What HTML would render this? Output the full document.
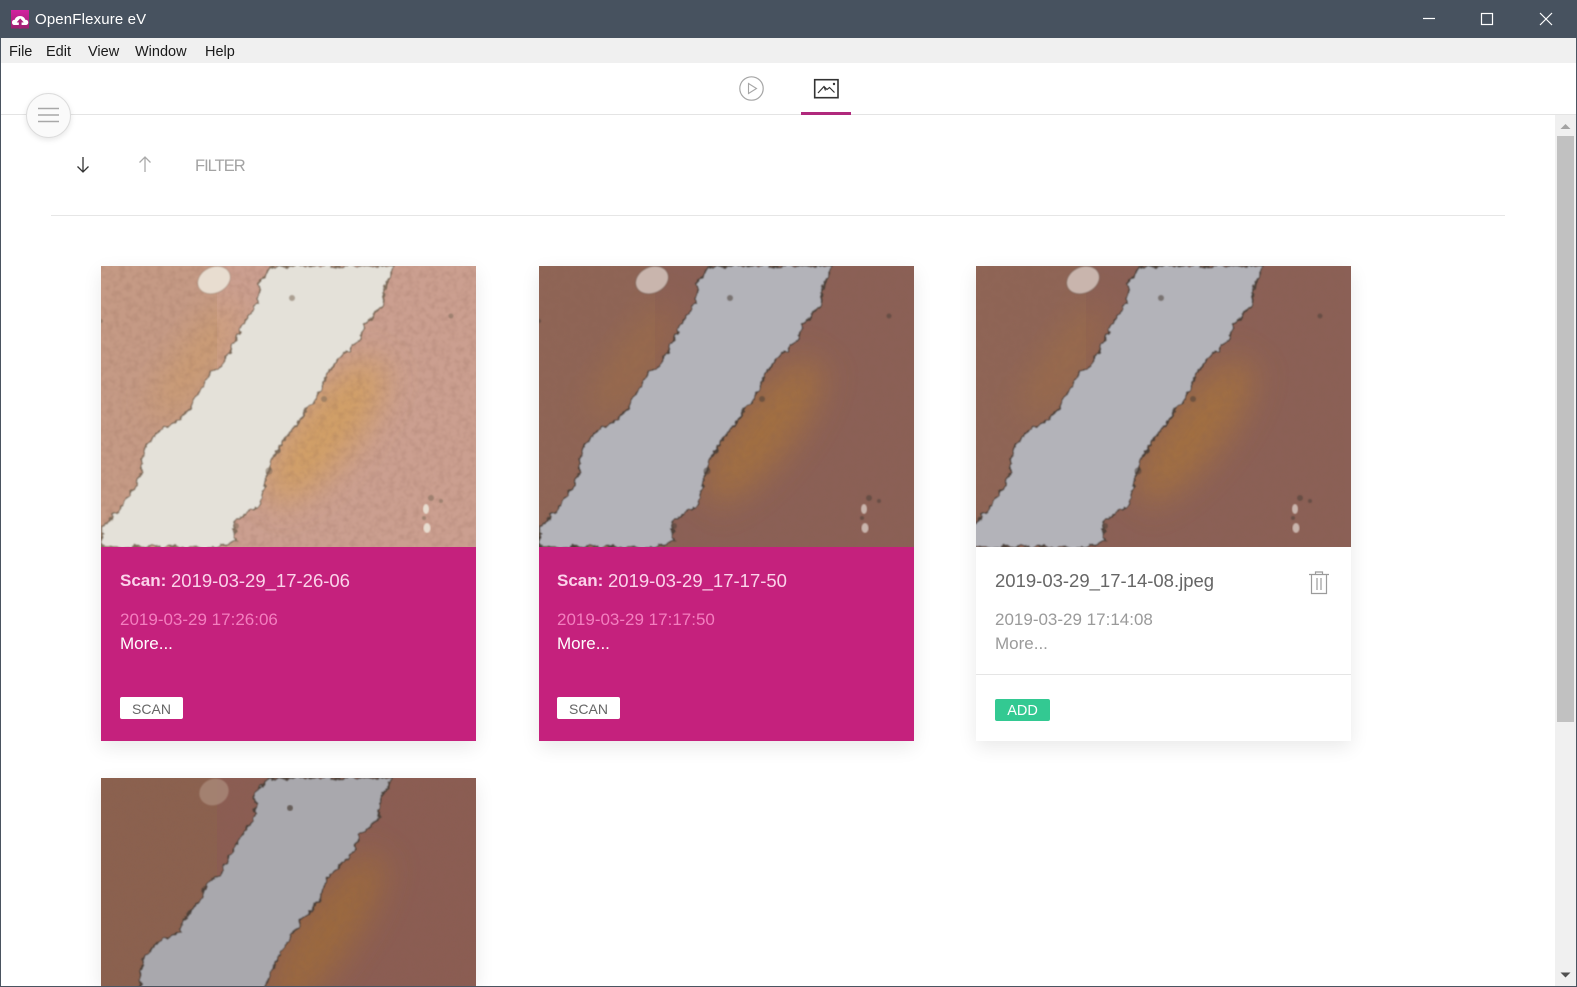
<!DOCTYPE html>
<html lang="en"><head><meta charset="utf-8"><title>OpenFlexure eV</title>
<style>
html,body{margin:0;padding:0;background:#fff;width:1577px;height:987px;overflow:hidden}
body{font-family:"Liberation Sans",sans-serif}
#w{position:relative;width:1577px;height:987px;overflow:hidden}
.a{position:absolute;white-space:nowrap}
.card{position:absolute;width:375px;box-shadow:0 6px 18px rgba(0,0,0,.09)}
.card svg{display:block}
.t{line-height:20px}
.m{font-size:14.5px;color:#1a1a1a;top:42px;line-height:20px}
</style></head><body><div id="w">
<svg width="0" height="0" style="position:absolute">
<defs>
<filter id="b1" x="-5%" y="-5%" width="110%" height="110%"><feGaussianBlur stdDeviation=".8"/></filter>
<filter id="j" x="-5%" y="-5%" width="110%" height="110%"><feTurbulence type="fractalNoise" baseFrequency=".13" numOctaves="3" seed="7" result="t"/><feDisplacementMap in="SourceGraphic" in2="t" scale="8" xChannelSelector="R" yChannelSelector="G"/><feGaussianBlur stdDeviation=".8"/></filter>
<filter id="b2" x="-60%" y="-60%" width="220%" height="220%"><feGaussianBlur stdDeviation="16"/></filter>
<filter id="n" x="0" y="0" width="100%" height="100%"><feTurbulence type="fractalNoise" baseFrequency=".16" numOctaves="2" seed="4"/><feColorMatrix values="0 0 0 0 .25 0 0 0 0 .12 0 0 0 0 .08 1.4 0 0 0 -.55"/><feGaussianBlur stdDeviation=".5"/></filter>
<symbol id="s1" viewBox="0 0 375 281" width="375" height="281">
<rect width="375" height="281" fill="var(--l)"/>
<path d="M171 0 294 0 375 0V281H116V0Z" fill="var(--r)"/>
<ellipse cx="225" cy="165" rx="88" ry="30" transform="rotate(-52 225 165)" fill="var(--o)" opacity=".72" filter="url(#b2)"/>
<ellipse cx="95" cy="95" rx="70" ry="18" transform="rotate(-55 95 95)" fill="var(--o)" opacity=".4" filter="url(#b2)"/>
<rect width="375" height="281" filter="url(#n)" opacity=".3"/>
<path d="M171 0 159 14 156 37 139 64 132 81 122 97 106 111 99 127 86 144 79 154 59 164 42 184 41 204 32 224 16 247 1 261 0 281H116L136 274 132 257 159 237 166 211 172 191 196 157 216 131 222 117 236 94 256 77 266 57 282 37 286 14 294 0Z" fill="var(--b)" stroke="var(--e)" stroke-width="1.8" filter="url(#j)"/>
<ellipse cx="113" cy="14" rx="17" ry="13" transform="rotate(-25 113 14)" fill="var(--c)" stroke="var(--e)" stroke-opacity=".4" filter="url(#b1)"/>
<g fill="var(--e)" opacity=".55" filter="url(#b1)"><circle cx="191" cy="32" r="3"/><circle cx="0" cy="55" r="2"/><circle cx="350" cy="50" r="2.500"/><circle cx="330" cy="232" r="3"/><circle cx="323" cy="252" r="2"/><circle cx="340" cy="235" r="2"/><circle cx="223" cy="133" r="3"/><circle cx="168" cy="205" r="3.500"/><circle cx="135" cy="260" r="3"/></g>
<ellipse cx="325" cy="243" rx="3" ry="5" fill="var(--c)" filter="url(#b1)"/><ellipse cx="326" cy="262" rx="3.500" ry="5" fill="var(--c)" filter="url(#b1)"/>
</symbol>
<symbol id="s2" viewBox="0 0 375 208" width="375" height="208">
<rect width="375" height="208" fill="var(--l)"/>
<path d="M171 0H375V208H116V0Z" fill="var(--r)"/>
<ellipse cx="225" cy="155" rx="95" ry="28" transform="rotate(-55 225 155)" fill="var(--o)" opacity=".75" filter="url(#b2)"/>
<rect width="375" height="208" filter="url(#n)" opacity=".3"/>
<path d="M167 0 154 15 154 38 136 65 122 92 104 108 99 123 82 142 79 155 59 162 41 182 39 209 39 215H162L173 188 193 152 216 125 228 98 249 78 259 58 276 42 283 15 291 0Z" fill="var(--b)" stroke="var(--e)" stroke-width="1.8" filter="url(#j)"/>
<ellipse cx="113" cy="14" rx="15" ry="13" transform="rotate(-25 113 14)" fill="var(--c)" opacity=".7" filter="url(#b1)"/>
<circle cx="189" cy="30" r="3" fill="var(--e)" opacity=".7" filter="url(#b1)"/>
</symbol>
</defs>
</svg>

<!-- title bar -->
<div class="a" style="left:0;top:0;width:1577px;height:38px;background:#47525f"></div>
<svg class="a" style="left:10px;top:10px" width="20" height="19" viewBox="0 0 20 19">
<defs><linearGradient id="lg" x1="0" y1="0" x2="0" y2="1"><stop offset="0" stop-color="#d321a0"/><stop offset="1" stop-color="#9c1f6e"/></linearGradient></defs>
<rect x="1" width="18" height="18.500" fill="url(#lg)"/>
<path d="M2 12.500C2 10.500 3.400 9.800 4.800 9.800 5.200 7.600 7.300 6 10 6s4.800 1.600 5.200 3.800C16.800 9.800 18.300 10.600 18.300 12.500 18.300 14 17 15 15.700 15H4.400C3 15 2 14 2 12.500Z" fill="#fff"/>
<path d="M10.200 8.600 7 12.200H9V18.500H11.400V12.200H13.400Z" fill="#a81f79" stroke="#a81f79" stroke-width=".4"/>
</svg>
<div class="a" style="left:35px;top:10px;font-size:15px;line-height:20px;color:#fff;letter-spacing:.15px">OpenFlexure eV</div>
<svg class="a" style="left:1420px;top:8px" width="140" height="22" fill="none" stroke="#fff" stroke-width="1.2">
<path d="M3 10.500H15"/><rect x="61.500" y="5.500" width="11" height="11"/><path d="M120 5 132 17M132 5 120 17"/>
</svg>

<!-- menu -->
<div class="a" style="left:0;top:38px;width:1577px;height:25px;background:#f0f0f0"></div>
<div class="a m" style="left:9px">File</div>
<div class="a m" style="left:46px">Edit</div>
<div class="a m" style="left:88px">View</div>
<div class="a m" style="left:135px">Window</div>
<div class="a m" style="left:205px">Help</div>

<!-- tabs -->
<div class="a" style="left:0;top:114px;width:1577px;height:1px;background:#e4e4e4"></div>
<svg class="a" style="left:735px;top:72px" width="34" height="34" fill="none">
<circle cx="16.500" cy="16.500" r="11.700" stroke="#a6a6a6" stroke-width="1.200"/><path d="M13.500 11.500V21.500L21.500 16.500Z" stroke="#a6a6a6" stroke-width="1.100"/>
</svg>
<svg class="a" style="left:812px;top:77px" width="30" height="24" fill="none">
<rect x="2.700" y="2.700" width="23.300" height="18" stroke="#333" stroke-width="1.600"/>
<path d="M6 16 12 9.500 15 12.500 17.500 10.500 22.500 15.500M13.500 13.500 12 9.500" stroke="#333" stroke-width="1.200"/><circle cx="22" cy="7" r="1.200" fill="#333"/>
</svg>
<div class="a" style="left:801px;top:112px;width:50px;height:3px;background:#b0297c"></div>

<!-- hamburger -->
<div class="a" style="left:26px;top:92.500px;width:43px;height:43px;border-radius:50%;background:#fafafa;border:1px solid #dcdcdc;box-shadow:0 2px 6px rgba(0,0,0,.1)"></div>
<svg class="a" style="left:37px;top:106px" width="24" height="18" stroke="#a8a8a8" stroke-width="1.500"><path d="M1 2.500H22M1 9H22M1 15.500H22"/></svg>

<!-- toolbar -->
<svg class="a" style="left:73px;top:155px" width="20" height="20" fill="none" stroke="#333" stroke-width="1.300"><path d="M10 2V17M4.500 11.500 10 17 15.500 11.500"/></svg>
<svg class="a" style="left:135px;top:155px" width="20" height="20" fill="none" stroke="#aaa" stroke-width="1.300"><path d="M10 17V2M4.500 7.500 10 2 15.500 7.500"/></svg>
<div class="a" style="left:195px;top:156px;font-size:16.500px;line-height:20px;color:#a3a3a3;letter-spacing:-1px">FILTER</div>
<div class="a" style="left:51px;top:215px;width:1454px;height:1px;background:#e6e6e6"></div>

<!-- card 1 -->
<div class="card" style="left:101px;top:266px;height:475px;background:#c5217d">
<svg width="375" height="281" style="--l:#c59a85;--r:#cb9f90;--o:#d39f55;--b:#e4e1d9;--e:#7d6a58;--c:#e8ddd0"><use href="#s1"/></svg>
</div>
<div class="a t" style="left:120px;top:571px;font-size:17px;font-weight:bold;color:#fbd3ea">Scan:</div>
<div class="a t" style="left:171px;top:571px;font-size:18.500px;color:#fbd3ea">2019-03-29_17-26-06</div>
<div class="a t" style="left:120px;top:610px;font-size:17px;color:#f37fbf">2019-03-29 17:26:06</div>
<div class="a t" style="left:120px;top:634px;font-size:17px;color:#fff">More...</div>
<div class="a" style="left:120px;top:697px;width:63px;height:22px;background:#fff;border-radius:2px;color:#666;font-size:14px;line-height:24px;text-align:center">SCAN</div>

<!-- card 2 -->
<div class="card" style="left:539px;top:266px;height:475px;background:#c5217d">
<svg width="375" height="281" style="--l:#8f6556;--r:#8b6056;--o:#ab763a;--b:#b3b3b9;--e:#4b4038;--c:#c9b5ad"><use href="#s1"/></svg>
</div>
<div class="a t" style="left:557px;top:571px;font-size:17px;font-weight:bold;color:#fbd3ea">Scan:</div>
<div class="a t" style="left:608px;top:571px;font-size:18.500px;color:#fbd3ea">2019-03-29_17-17-50</div>
<div class="a t" style="left:557px;top:610px;font-size:17px;color:#f37fbf">2019-03-29 17:17:50</div>
<div class="a t" style="left:557px;top:634px;font-size:17px;color:#fff">More...</div>
<div class="a" style="left:557px;top:697px;width:63px;height:22px;background:#fff;border-radius:2px;color:#666;font-size:14px;line-height:24px;text-align:center">SCAN</div>

<!-- card 3 -->
<div class="card" style="left:976px;top:266px;height:475px;background:#fff">
<svg width="375" height="281" style="--l:#8f6556;--r:#8b6056;--o:#ab763a;--b:#b3b3b9;--e:#4b4038;--c:#c9b5ad"><use href="#s1" x="-6"/><rect x="369" width="6" height="281" fill="#8b6056"/></svg>
</div>
<div class="a t" style="left:995px;top:571px;font-size:18.500px;color:#666">2019-03-29_17-14-08.jpeg</div>
<svg class="a" style="left:1307px;top:570px" width="24" height="26" fill="none" stroke="#9b9b9b" stroke-width="1.200">
<path d="M2 4.500H22M8.500 4.500V2H15.500V4.500M4.500 4.500V23.500H19.500V4.500M10 8V20M14 8V20"/>
</svg>
<div class="a t" style="left:995px;top:610px;font-size:17px;color:#9a9a9a">2019-03-29 17:14:08</div>
<div class="a t" style="left:995px;top:634px;font-size:17px;color:#9a9a9a">More...</div>
<div class="a" style="left:976px;top:674px;width:375px;height:1px;background:#e5e5e5"></div>
<div class="a" style="left:995px;top:699px;width:55px;height:22px;background:#33c992;border-radius:2px;color:#fff;font-size:14.500px;line-height:24px;text-align:center">ADD</div>

<!-- card 4 -->
<div class="card" style="left:101px;top:778px;height:208px;background:#fff;overflow:hidden">
<svg width="375" height="208" style="--l:#8b614f;--r:#8b5d53;--o:#a26e38;--b:#a9a8ad;--e:#4b4038;--c:#ae8f7f"><use href="#s2"/></svg>
</div>

<!-- scrollbar -->
<div class="a" style="left:1555px;top:115px;width:21px;height:871px;background:#f0f0f0"></div>
<div class="a" style="left:1557px;top:136px;width:17px;height:586px;background:#c1c1c1"></div>
<svg class="a" style="left:1559px;top:122px" width="13" height="8"><path d="M1.500 7 6.500 2 11.500 7Z" fill="#a3a3a3"/></svg>
<svg class="a" style="left:1559px;top:971px" width="13" height="8"><path d="M1.500 1.500H11.500L6.500 6.500Z" fill="#505050"/></svg>

<!-- window border -->
<div class="a" style="left:0;top:38px;width:1px;height:949px;background:#4a5460"></div>
<div class="a" style="left:1576px;top:38px;width:1px;height:949px;background:#4a5460"></div>
<div class="a" style="left:0;top:986px;width:1577px;height:1px;background:#4a5460"></div>
</div></body></html>
